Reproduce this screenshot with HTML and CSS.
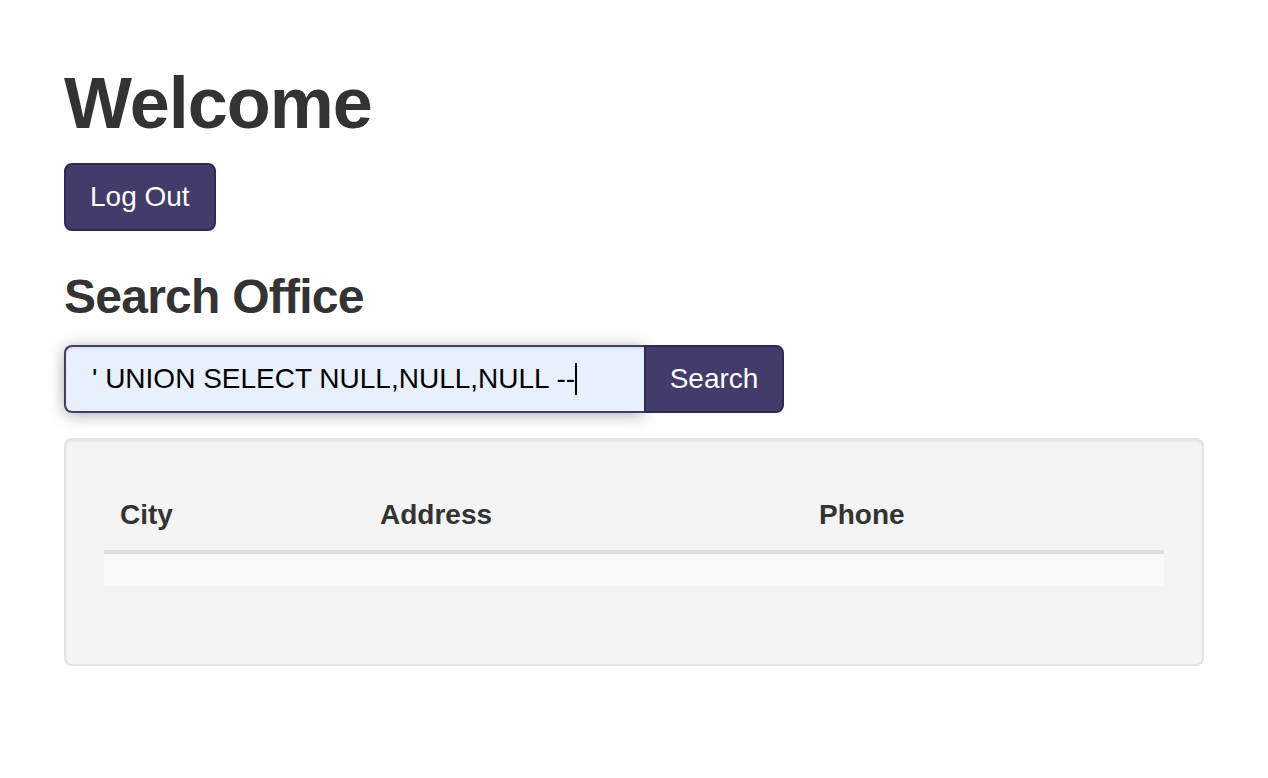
FILE: index.html
```html
<!DOCTYPE html>
<html lang="en">
<head>
<meta charset="utf-8">
<title>Welcome</title>
<link rel="stylesheet" href="styles.css">
</head>
<body>
<div class="container">
  <h1 class="title">Welcome</h1>
  <button class="btn" type="button">Log Out</button>
  <h3 class="subtitle">Search Office</h3>
  <form class="input-group">
    <div class="search-field" role="textbox" aria-label="Search"><span class="typed">' UNION SELECT NULL,NULL,NULL --</span><span class="caret"></span></div>
    <button class="btn btn-addon" type="button">Search</button>
  </form>
  <div class="well">
    <table class="table">
      <thead>
        <tr><th class="col-city">City</th><th class="col-address">Address</th><th class="col-phone">Phone</th></tr>
      </thead>
      <tbody>
        <tr class="striped"><td></td><td></td><td></td></tr>
      </tbody>
    </table>
  </div>
</div>
</body>
</html>
```
FILE: styles.css
```css
* { box-sizing: border-box; }
html, body { margin: 0; padding: 0; background: #ffffff; }
body {
  font-family: "Liberation Sans", Arial, Helvetica, sans-serif;
  font-size: 28px;
  line-height: 1.42857;
  color: #333333;
}
.container {
  width: 1140px;
  margin-left: 64px;
  padding-top: 24px;
}
.title {
  margin: 40px 0 20px;
  font-size: 72px;
  line-height: 1.1;
  font-weight: 700;
  letter-spacing: -1px;
}
.btn {
  display: inline-block;
  height: 68px;
  padding: 0 24px;
  font-family: inherit;
  font-size: 28px;
  line-height: 1;
  color: #ffffff;
  background: #433b69;
  border: 2px solid #2f2a52;
  border-radius: 8px;
  cursor: pointer;
}
.subtitle {
  margin: 40px 0 21px;
  font-size: 48px;
  line-height: 1.1;
  font-weight: 700;
  letter-spacing: -0.75px;
}
.input-group {
  display: flex;
  width: 720px;
  margin: 0 0 25px;
}
.search-field {
  display: flex;
  align-items: center;
  width: 580px;
  height: 68px;
  padding: 0 24px 0 26px;
  background: #e8f0fe;
  border: 2px solid #433b69;
  border-right: none;
  border-radius: 8px 0 0 8px;
  color: #000000;
  font-size: 28px;
  white-space: pre;
  box-shadow: inset 0 2px 2px rgba(0,0,0,.075), 0 2px 16px rgba(0,0,0,.32);
}
.caret {
  display: inline-block;
  width: 2px;
  height: 32px;
  background: #000000;
}
.btn-addon {
  width: 140px;
  padding: 0;
  border-radius: 0 8px 8px 0;
}
.well {
  min-height: 40px;
  padding: 38px;
  background: #f4f4f4;
  border: 2px solid #e3e3e3;
  border-radius: 8px;
  box-shadow: inset 0 2px 2px rgba(0,0,0,.05);
}
.table {
  width: 100%;
  border-collapse: collapse;
  border-spacing: 0;
  margin-bottom: 40px;
}
.table th {
  text-align: left;
  font-weight: 700;
  padding: 17px 16px 15px;
  line-height: 40px;
  border-bottom: 4px solid #dddddd;
}
.table td {
  padding: 16px;
  height: 34px;
  border-top: 0;
}
.col-city { width: 260px; }
.col-address { width: 439px; }
.striped { background: #f9f9f9; }
```
